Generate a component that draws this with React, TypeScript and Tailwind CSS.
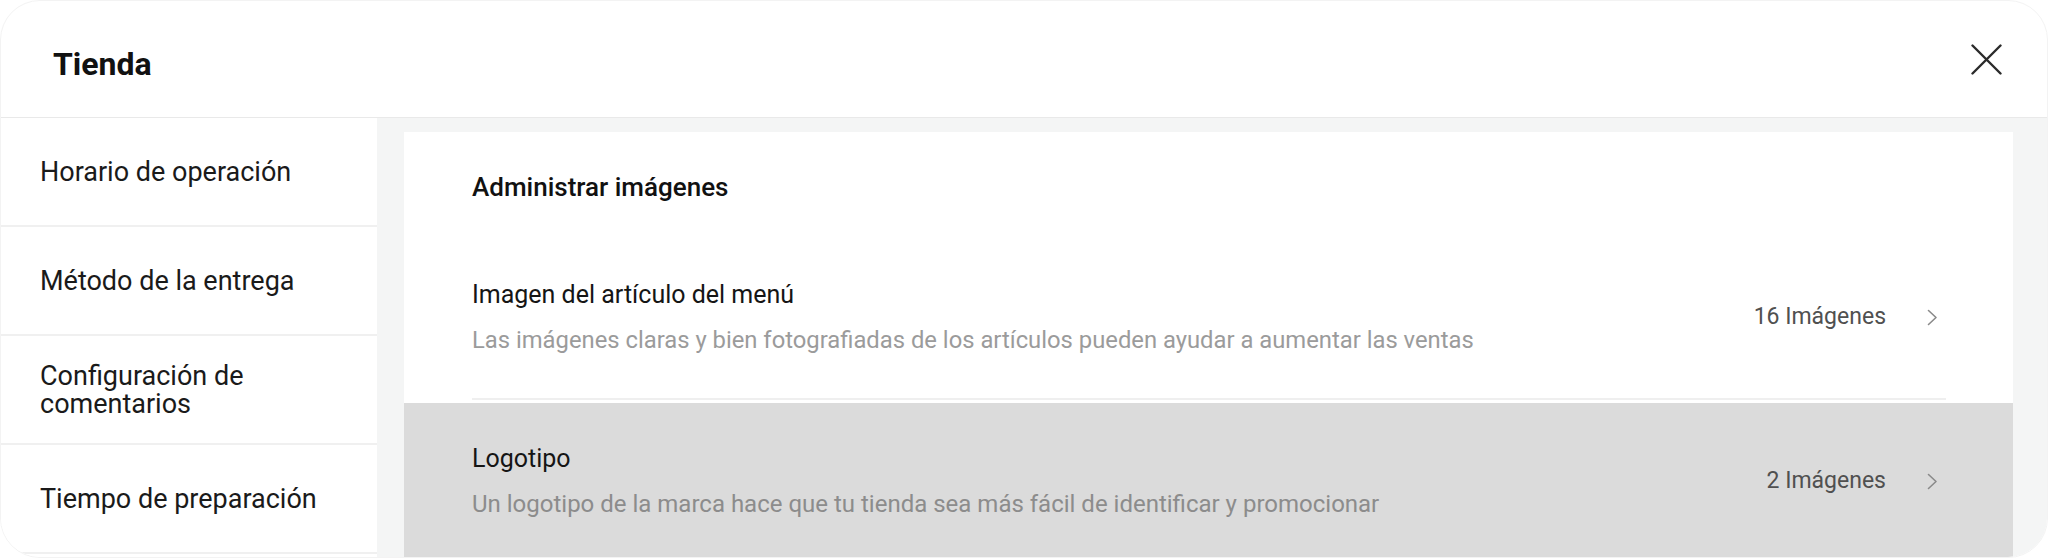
import React from "react";

const sideItems: string[][] = [
  ["Horario de operación"],
  ["Método de la entrega"],
  ["Configuración de", "comentarios"],
  ["Tiempo de preparación"],
];

function Chevron() {
  return (
    <svg width="11" height="17" viewBox="0 0 11 17" fill="none" className="shrink-0">
      <path d="M1.5 1.5 L9 8.5 L1.5 15.5" stroke="#8a8a8a" strokeWidth="1.6" strokeLinecap="round" strokeLinejoin="round" />
    </svg>
  );
}

function CloseIcon() {
  return (
    <svg width="31" height="31" viewBox="0 0 31 31" fill="none">
      <path d="M1.5 1.5 L29.5 29.5 M29.5 1.5 L1.5 29.5" stroke="#2b2b2b" strokeWidth="2.4" strokeLinecap="round" />
    </svg>
  );
}

export default function App() {
  return (
    <div className="w-[2048px] h-[558px] bg-white font-['Roboto',sans-serif]">
      <div className="w-full h-full rounded-[40px] border border-[#f3f3f3] overflow-hidden bg-white flex flex-col">
        <header className="h-[117px] shrink-0 border-b border-[#e9e9e9] flex items-center justify-between pl-[52px] pr-[45px]">
          <h1 className="mt-[10px] text-[32px] leading-[40px] font-bold text-[#111111]">Tienda</h1>
          <button className="w-[31px] h-[31px] flex items-center justify-center">
            <CloseIcon />
          </button>
        </header>
        <div className="flex flex-1 min-h-0">
          <nav className="w-[376px] shrink-0 bg-white">
            {sideItems.map((lines, i) => (
              <div
                key={i}
                className="h-[109px] border-b-2 border-[#f0f0f0] flex items-center pl-[39px] text-[27px] leading-[28px] text-[#1a1a1a]"
              >
                <div>
                  {lines.map((l, j) => (
                    <div key={j}>{l}</div>
                  ))}
                </div>
              </div>
            ))}
          </nav>
          <main className="flex-1 bg-[#f4f5f5] pl-[27px] pr-[34px] pt-[14px]">
            <div className="bg-white h-full">
              <div className="h-[106px] pt-[38px] pl-[68px]">
                <h2 className="text-[26px] leading-[34px] font-medium text-[#111111]">Administrar imágenes</h2>
              </div>
              <div className="ml-[68px] mr-[67px] border-b-2 border-[#efefef] pt-[41px] pb-[43px] flex items-center">
                <div className="flex-1">
                  <div className="text-[25px] leading-[32px] text-[#151515]">Imagen del artículo del menú</div>
                  <div className="mt-[14px] text-[23.8px] leading-[30px] text-[#9b9b9b]">
                    Las imágenes claras y bien fotografiadas de los artículos pueden ayudar a aumentar las ventas
                  </div>
                </div>
                <div className="flex items-center gap-[41px] pr-[8px]">
                  <span className="text-[23px] leading-[30px] text-[#505050]">16 Imágenes</span>
                  <Chevron />
                </div>
              </div>
              <div className="mt-[3px] bg-[#dbdbdb] pl-[68px] pr-[75px] pt-[40px] pb-[40px] flex items-center">
                <div className="flex-1">
                  <div className="text-[25px] leading-[32px] text-[#151515]">Logotipo</div>
                  <div className="mt-[14px] text-[24px] leading-[30px] text-[#8c8c8c]">
                    Un logotipo de la marca hace que tu tienda sea más fácil de identificar y promocionar
                  </div>
                </div>
                <div className="flex items-center gap-[41px]">
                  <span className="text-[23px] leading-[30px] text-[#505050]">2 Imágenes</span>
                  <Chevron />
                </div>
              </div>
            </div>
          </main>
        </div>
      </div>
    </div>
  );
}
